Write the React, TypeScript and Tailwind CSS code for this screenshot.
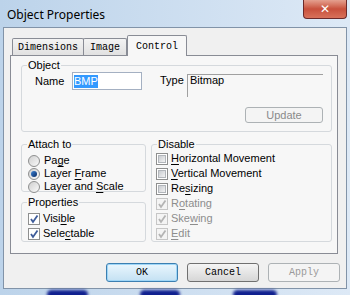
import React from 'react';

const sans = "font-['Liberation_Sans',Arial,sans-serif] text-[11px] leading-[13px]";
const mono = "font-['Liberation_Mono','Courier_New',monospace] text-[10px]";

function Key({ text, at, disabled }: { text: string; at: number; disabled?: boolean }) {
  return (
    <span className={disabled ? 'text-[#8d8d8d]' : 'text-black'}>
      {text.slice(0, at)}
      <span className="underline underline-offset-[2px]">{text[at]}</span>
      {text.slice(at + 1)}
    </span>
  );
}

function Radio({ label, at, checked }: { label: string; at: number; checked?: boolean }) {
  return (
    <div className="flex h-[13px] items-center">
      <span className="flex h-[12px] w-[12px] items-center justify-center rounded-full border border-[#8e8f8f] bg-gradient-to-br from-[#cfcfcf] to-[#fbfbfb]">
        {checked && (
          <span className="h-[6px] w-[6px] rounded-full bg-gradient-to-br from-[#3d84d6] to-[#0c2d66]" />
        )}
      </span>
      <span className="ml-[4px]">
        <Key text={label} at={at} />
      </span>
    </div>
  );
}

function Check({
  label,
  at,
  checked,
  disabled,
}: {
  label: string;
  at: number;
  checked?: boolean;
  disabled?: boolean;
}) {
  return (
    <div className="flex h-[15px] items-center">
      <span
        className={`flex h-[12px] w-[12px] items-center justify-center border ${
          disabled ? 'border-[#c6c6c6] bg-[#f4f4f4]' : 'border-[#8e8f8f] bg-white'
        }`}
      >
        {checked ? (
          <svg width="10" height="10" viewBox="0 0 10 10">
            <path
              d="M2 5 L4 8 L8.5 1.5"
              fill="none"
              stroke={disabled ? '#b4b4b4' : '#3e5c9a'}
              strokeWidth="1.8"
            />
          </svg>
        ) : (
          <span className="h-[8px] w-[8px] border border-[#b2b6bb] bg-gradient-to-br from-[#c9ccd1] to-[#f3f3f3]" />
        )}
      </span>
      <span className="ml-[3px]">
        <Key text={label} at={at} disabled={disabled} />
      </span>
    </div>
  );
}

function Group({
  title,
  className,
  children,
}: {
  title: string;
  className: string;
  children: React.ReactNode;
}) {
  return (
    <fieldset className={`rounded-[3px] border border-[#d5d9dd] ${className}`}>
      <legend className="ml-[5px] px-[1px] leading-[13px]">{title}</legend>
      {children}
    </fieldset>
  );
}

function Button({ label, focused, disabled }: { label: string; focused?: boolean; disabled?: boolean }) {
  const look = disabled
    ? 'border-[#adb2b5] bg-[#f4f4f4] text-[#9a9a9a]'
    : focused
      ? 'border-[#3c7fb1] bg-gradient-to-b from-[#eaf6fd] to-[#c4e1f3] text-black shadow-[inset_0_0_0_1px_#9fd6f7]'
      : 'border-[#707070] bg-gradient-to-b from-[#f5f5f5] to-[#d6d6d6] text-black';
  return (
    <div
      className={`flex h-[19px] w-[72px] items-center justify-center rounded-[3px] border ${mono} ${look}`}
    >
      {label}
    </div>
  );
}

export default function App() {
  return (
    <div className={`relative flex h-[295px] w-[350px] flex-col overflow-hidden bg-gradient-to-r from-[#bcd3ea] to-[#dde9f6] ${sans}`}>
      {/* title bar */}
      <div className="flex h-[27px] items-center pl-[7px] pt-[1px] font-['Noto_Sans',sans-serif] text-[12px] text-black">
        Object Properties
      </div>
      <div className="absolute right-[3px] top-0 flex h-[19px] w-[44px] items-center justify-center rounded-b-[4px] border border-t-0 border-[#6b2a2a] bg-gradient-to-b from-[#e4a08f] via-[#c8503c] to-[#d8715a]">
        <span className="font-['DejaVu_Sans',sans-serif] text-[12px] font-bold leading-none text-white">✕</span>
      </div>

      {/* client area */}
      <div className="mx-[3px] flex h-[262px] flex-col border border-[#8193a8] bg-[#f0f0f0]">
        <div className="pl-[6px] pt-[7px]">
          <div className={`flex h-[20px] items-end pl-[2px] ${mono}`}>
            <div className="flex h-[17px] w-[72px] items-center justify-center rounded-t-[2px] border border-b-0 border-[#898c95] bg-gradient-to-b from-[#f3f3f3] to-[#e1e1e1]">
              Dimensions
            </div>
            <div className="-ml-px flex h-[17px] w-[44px] items-center justify-center rounded-t-[2px] border border-b-0 border-[#898c95] bg-gradient-to-b from-[#f3f3f3] to-[#e1e1e1]">
              Image
            </div>
            <div className="relative z-10 -mb-px flex h-[21px] w-[60px] items-center justify-center rounded-t-[2px] border border-b-0 border-[#898c95] bg-[#f7f7f7]">
              Control
            </div>
          </div>

          {/* tab panel */}
          <div className="flex h-[199px] w-[328px] flex-col border border-[#898c95] bg-[#f7f7f7] pl-[10px]">
            <Group title="Object" className="mt-[3px] h-[73px] w-[311px]">
              <div className="flex items-start pl-[13px]">
                <div className="flex h-[18px] items-center">
                  <span className="w-[37px]">Name</span>
                  <div className="flex h-[18px] w-[70px] items-center border border-[#a4b0c2] bg-white pl-[1px]">
                    <span className="bg-[#3399ff] text-white">BMP</span>
                  </div>
                </div>
                <span className="ml-[18px] mt-[2px] w-[27px]">Type</span>
                <div className="flex flex-col">
                  <div className="mt-[2px] h-[23px] w-[136px] border-l border-t border-[#a0a0a0] pl-[2px] leading-[11px]">
                    Bitmap
                  </div>
                  <div className="mt-[10px] flex h-[16px] w-[78px] items-center justify-center self-end rounded-[3px] border border-[#adb2b5] bg-[#f4f4f4] text-[#8a8a8a]">
                    Update
                  </div>
                </div>
              </div>
            </Group>

            <div className="mt-[6px] flex gap-[5px]">
              <div className="flex flex-col gap-[4px]">
                <Group title="Attach to" className="h-[54px] w-[125px]">
                  <div className="flex flex-col pl-[6px] pt-[3px]">
                    <Radio label="Page" at={2} />
                    <Radio label="Layer Frame" at={6} checked />
                    <Radio label="Layer and Scale" at={10} />
                  </div>
                </Group>
                <Group title="Properties" className="h-[46px] w-[125px]">
                  <div className="flex flex-col pl-[6px] pt-[2px]">
                    <Check label="Visible" at={4} checked />
                    <Check label="Selectable" at={4} checked />
                  </div>
                </Group>
              </div>
              <Group title="Disable" className="h-[104px] w-[181px]">
                <div className="flex flex-col pl-[4px]">
                  <Check label="Horizontal Movement" at={0} />
                  <Check label="Vertical Movement" at={0} />
                  <Check label="Resizing" at={2} />
                  <Check label="Rotating" at={1} checked disabled />
                  <Check label="Skewing" at={3} checked disabled />
                  <Check label="Edit" at={0} checked disabled />
                </div>
              </Group>
            </div>
          </div>
        </div>

        <div className="mt-[9px] flex justify-end gap-[9px] pr-[6px]">
          <Button label="OK" focused />
          <Button label="Cancel" />
          <Button label="Apply" disabled />
        </div>
      </div>

      {/* blurred desktop showing through the bottom frame */}
      <div className="absolute bottom-[-4px] left-[47px] h-[9px] w-[41px] rounded-full bg-[#10208f] blur-[1.5px]" />
      <div className="absolute bottom-[-4px] left-[140px] h-[9px] w-[40px] rounded-full bg-[#10208f] blur-[1.5px]" />
      <div className="absolute bottom-[-4px] left-[233px] h-[9px] w-[44px] rounded-full bg-[#10208f] blur-[1.5px]" />
    </div>
  );
}
